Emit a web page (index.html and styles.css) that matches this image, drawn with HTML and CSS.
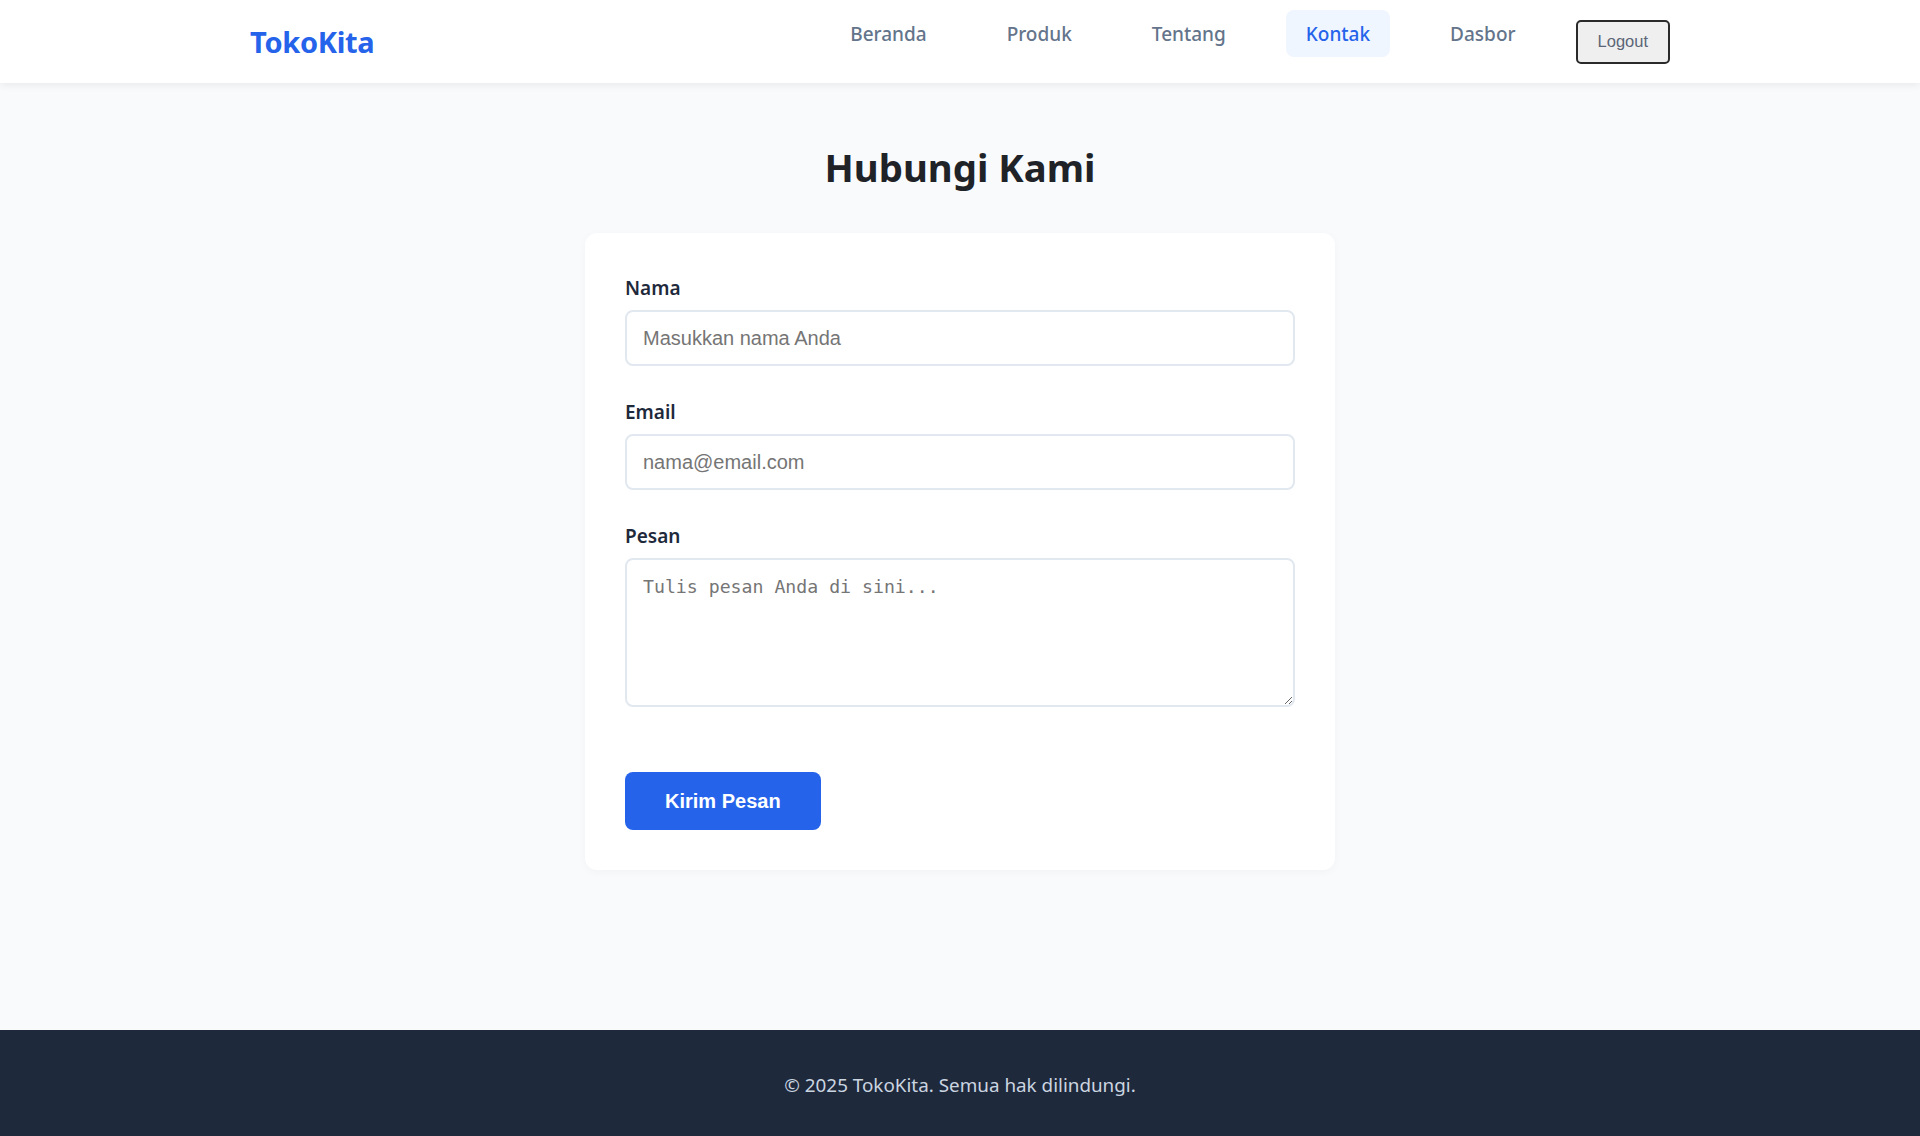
FILE: index.html
```html
<!DOCTYPE html>
<html lang="id">
<head>
<meta charset="utf-8">
<title>Kontak - TokoKita</title>
<link rel="stylesheet" href="styles.css">
</head>
<body>
<header class="site-header">
  <div class="container header-inner">
    <a class="logo" href="#">TokoKita</a>
    <nav class="nav">
      <ul class="nav-list">
        <li><a class="nav-link" href="#">Beranda</a></li>
        <li><a class="nav-link" href="#">Produk</a></li>
        <li><a class="nav-link" href="#">Tentang</a></li>
        <li><a class="nav-link active" href="#">Kontak</a></li>
        <li><a class="nav-link" href="#">Dasbor</a></li>
        <li><button class="logout-btn" type="button">Logout</button></li>
      </ul>
    </nav>
  </div>
</header>

<main class="main">
  <section class="contact">
    <h1 class="contact-title">Hubungi Kami</h1>
    <form class="contact-card">
      <div class="form-group">
        <label class="form-label" for="nama">Nama</label>
        <input class="form-input" id="nama" type="text" placeholder="Masukkan nama Anda">
      </div>
      <div class="form-group">
        <label class="form-label" for="email">Email</label>
        <input class="form-input" id="email" type="email" placeholder="nama@email.com">
      </div>
      <div class="form-group">
        <label class="form-label" for="pesan">Pesan</label>
        <textarea class="form-textarea" id="pesan" placeholder="Tulis pesan Anda di sini..."></textarea>
      </div>
      <button class="submit-btn" type="submit">Kirim Pesan</button>
    </form>
  </section>
</main>

<footer class="site-footer">
  <p class="footer-text">&copy; 2025 TokoKita. Semua hak dilindungi.</p>
</footer>
</body>
</html>
```
FILE: styles.css
```css
* {
  box-sizing: border-box;
}

html, body {
  margin: 0;
  padding: 0;
}

body {
  min-height: 100vh;
  display: flex;
  flex-direction: column;
  font-family: "Noto Sans", "Open Sans", sans-serif;
  background: #f8fafc;
  color: #1e293b;
}

.container {
  max-width: 1500px;
  margin: 0 auto;
  padding: 0 40px;
  width: 100%;
}

/* Header */
.site-header {
  background: #ffffff;
  height: 83px;
  box-shadow: 0 2px 8px rgba(0, 0, 0, 0.07);
  position: relative;
  z-index: 1;
}

.header-inner {
  height: 100%;
  display: flex;
  align-items: center;
  justify-content: space-between;
}

.logo {
  font-size: 29px;
  font-weight: 700;
  color: #2563eb;
  text-decoration: none;
  line-height: 40px;
  letter-spacing: -0.3px;
}

.nav-list {
  list-style: none;
  margin: 0;
  padding: 0;
  display: flex;
  align-items: center;
  gap: 40px;
}

.nav-link {
  display: block;
  padding: 11px 20px 9px;
  margin-bottom: 16px;
  font-size: 19px;
  font-weight: 500;
  line-height: 27px;
  color: #64748b;
  text-decoration: none;
  border-radius: 8px;
}

.nav-link.active {
  color: #2563eb;
  background: #eff6ff;
}

.logout-btn {
  display: block;
  height: 44px;
  padding: 0 20px;
  font-family: "Liberation Sans", Arial, sans-serif;
  font-size: 16.5px;
  color: #5b6577;
  background: #efefef;
  border: 2px solid #2a2a2a;
  border-radius: 5px;
  cursor: pointer;
}

/* Main */
.main {
  flex: 1;
}

.contact {
  padding: 58px 0 60px;
  display: flex;
  flex-direction: column;
  align-items: center;
}

.contact-title {
  margin: 0 0 39px;
  font-size: 38.3px;
  line-height: 53px;
  font-weight: 700;
  color: #1f2328;
}

.contact-card {
  width: 750px;
  background: #ffffff;
  border-radius: 12px;
  padding: 40px;
  box-shadow: 0 2px 10px rgba(15, 23, 42, 0.03);
}

.form-group {
  margin-bottom: 31px;
}

.form-label {
  display: block;
  margin-bottom: 7px;
  font-size: 19px;
  line-height: 30px;
  font-weight: 600;
  color: #1e293b;
}

.form-input,
.form-textarea {
  display: block;
  width: 100%;
  border: 2px solid #e2e8f0;
  border-radius: 8px;
  background: #ffffff;
  color: #1e293b;
  outline: none;
}

.form-input {
  height: 56px;
  padding: 0 16px;
  font-family: "Liberation Sans", Arial, sans-serif;
  font-size: 20px;
}

.form-textarea {
  height: 149px;
  padding: 14px 16px;
  font-family: "DejaVu Sans Mono", "Liberation Mono", monospace;
  font-size: 18.2px;
  line-height: 26px;
  resize: vertical;
}

.form-input::placeholder,
.form-textarea::placeholder {
  color: #757575;
}

.submit-btn {
  display: block;
  margin-top: 65px;
  height: 58px;
  padding: 0 40px;
  background: #2563eb;
  color: #ffffff;
  border: none;
  border-radius: 8px;
  font-family: "Liberation Sans", Arial, sans-serif;
  font-size: 20px;
  font-weight: 700;
  cursor: pointer;
}

/* Footer */
.site-footer {
  background: #1e293b;
  height: 106px;
  padding-top: 4px;
  display: flex;
  align-items: center;
  justify-content: center;
}

.footer-text {
  margin: 0;
  font-size: 18.85px;
  color: #cbd5e1;
}
```
